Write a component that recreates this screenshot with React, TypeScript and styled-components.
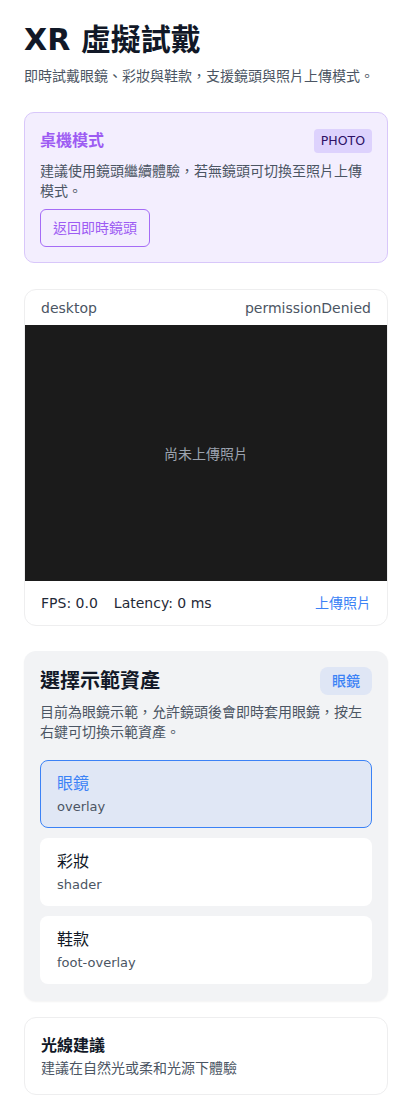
import React from "react";
import styled, { createGlobalStyle } from "styled-components";

const Global = createGlobalStyle`
  * { box-sizing: border-box; }
  html, body { margin: 0; padding: 0; background: #ffffff; }
  body {
    font-family: "DejaVu Sans", "Noto Sans CJK TC", sans-serif;
    color: #111827;
    -webkit-font-smoothing: antialiased;
  }
`;

const Page = styled.main`
  display: flex;
  flex-direction: column;
  padding: 22px 24px 24px;
`;

const Header = styled.header`
  display: flex;
  flex-direction: column;
  gap: 8px;
  margin-bottom: 26px;
`;

const Title = styled.h1`
  margin: 0;
  font-size: 30px;
  line-height: 36px;
  font-weight: 700;
  color: #111827;
`;

const Subtitle = styled.p`
  margin: 0;
  font-size: 14px;
  line-height: 20px;
  color: #4b5563;
`;

const NoticeCard = styled.section`
  display: flex;
  flex-direction: column;
  align-items: flex-start;
  gap: 8px;
  padding: 15px;
  background: #f3eefe;
  border: 1px solid #d8c7fa;
  border-radius: 10px;
  margin-bottom: 26px;
`;

const RowBetween = styled.div`
  display: flex;
  align-items: center;
  justify-content: space-between;
  align-self: stretch;
  min-height: 25px;
`;

const NoticeTitle = styled.h2`
  margin: 0;
  font-size: 16px;
  line-height: 24px;
  font-weight: 700;
  color: #9d5cf3;
`;

const Badge = styled.span<{ $tone: "purple" | "blue" }>`
  display: inline-flex;
  align-items: center;
  font-size: ${(p) => (p.$tone === "purple" ? "12.5px" : "14px")};
  line-height: ${(p) => (p.$tone === "purple" ? "16px" : "20px")};
  padding: 4px ${(p) => (p.$tone === "purple" ? "7px" : "12px")};
  border-radius: ${(p) => (p.$tone === "purple" ? "4px" : "8px")};
  background: ${(p) => (p.$tone === "purple" ? "#ddd2fd" : "#dfe6f5")};
  color: ${(p) => (p.$tone === "purple" ? "#2e1065" : "#3b82f6")};
  font-weight: 500;
`;

const BodyText = styled.p`
  margin: 0;
  font-size: 14px;
  line-height: 20px;
  color: #4b5563;
`;

const OutlineButton = styled.button`
  font-family: inherit;
  font-size: 14px;
  line-height: 20px;
  height: 38px;
  padding: 0 12px;
  border: 1px solid #a56cf6;
  border-radius: 6px;
  background: transparent;
  color: #9d5cf3;
  cursor: pointer;
`;

const CameraCard = styled.section`
  display: flex;
  flex-direction: column;
  border: 1px solid #eeeeef;
  border-radius: 12px;
  overflow: hidden;
  background: #ffffff;
  margin-bottom: 25px;
`;

const CameraBar = styled.div<{ $pos: "top" | "bottom" }>`
  display: flex;
  align-items: center;
  justify-content: space-between;
  padding: 0 16px;
  height: ${(p) => (p.$pos === "top" ? "35px" : "44px")};
  font-size: 14px;
  line-height: 20px;
  color: ${(p) => (p.$pos === "top" ? "#4b5563" : "#1f2937")};
`;

const Stats = styled.div`
  display: flex;
  gap: 16px;
`;

const LinkText = styled.span`
  color: #3b82f6;
`;

const Viewport = styled.div`
  display: flex;
  align-items: center;
  justify-content: center;
  height: 256px;
  background: #1b1b1b;
  color: #9ca3af;
  font-size: 14px;
`;

const AssetCard = styled.section`
  display: flex;
  flex-direction: column;
  padding: 16px 16px 17px;
  background: #f2f3f5;
  border-radius: 12px;
  box-shadow: 0 1px 2px rgba(0, 0, 0, 0.05);
  margin-bottom: 16px;
`;

const AssetTitle = styled.h2`
  margin: 0;
  font-size: 20px;
  line-height: 28px;
  font-weight: 700;
  color: #111827;
`;

const AssetDesc = styled(BodyText)`
  margin-top: 7px;
`;

const OptionList = styled.div`
  display: flex;
  flex-direction: column;
  gap: 10px;
  margin-top: 18px;
`;

const Option = styled.button<{ $active?: boolean }>`
  display: flex;
  flex-direction: column;
  align-items: flex-start;
  gap: 4px;
  padding: 12px 16px;
  text-align: left;
  font-family: inherit;
  border: 1px solid ${(p) => (p.$active ? "#3b82f6" : "transparent")};
  border-radius: 8px;
  background: ${(p) => (p.$active ? "#e0e7f5" : "#ffffff")};
  cursor: pointer;
`;

const OptionName = styled.span<{ $active?: boolean }>`
  font-size: 16px;
  line-height: 21px;
  color: ${(p) => (p.$active ? "#3b82f6" : "#111827")};
`;

const OptionKind = styled.span`
  font-size: 13px;
  line-height: 17px;
  color: #4b5563;
`;

const TipCard = styled.section`
  display: flex;
  flex-direction: column;
  padding: 16px;
  border: 1px solid #eeeeef;
  border-radius: 12px;
  background: #ffffff;
`;

const TipTitle = styled.h3`
  margin: 0;
  font-size: 16px;
  line-height: 24px;
  font-weight: 700;
  color: #111827;
`;

const assets = [
  { name: "眼鏡", kind: "overlay", active: true },
  { name: "彩妝", kind: "shader", active: false },
  { name: "鞋款", kind: "foot-overlay", active: false },
];

export default function App() {
  return (
    <>
      <Global />
      <Page>
        <Header>
          <Title>XR 虛擬試戴</Title>
          <Subtitle>即時試戴眼鏡、彩妝與鞋款，支援鏡頭與照片上傳模式。</Subtitle>
        </Header>

        <NoticeCard>
          <RowBetween>
            <NoticeTitle>桌機模式</NoticeTitle>
            <Badge $tone="purple">PHOTO</Badge>
          </RowBetween>
          <BodyText>建議使用鏡頭繼續體驗，若無鏡頭可切換至照片上傳模式。</BodyText>
          <OutlineButton>返回即時鏡頭</OutlineButton>
        </NoticeCard>

        <CameraCard>
          <CameraBar $pos="top">
            <span>desktop</span>
            <span>permissionDenied</span>
          </CameraBar>
          <Viewport>尚未上傳照片</Viewport>
          <CameraBar $pos="bottom">
            <Stats>
              <span>FPS: 0.0</span>
              <span>Latency: 0 ms</span>
            </Stats>
            <LinkText>上傳照片</LinkText>
          </CameraBar>
        </CameraCard>

        <AssetCard>
          <RowBetween>
            <AssetTitle>選擇示範資產</AssetTitle>
            <Badge $tone="blue">眼鏡</Badge>
          </RowBetween>
          <AssetDesc>目前為眼鏡示範，允許鏡頭後會即時套用眼鏡，按左右鍵可切換示範資產。</AssetDesc>
          <OptionList>
            {assets.map((a) => (
              <Option key={a.name} $active={a.active}>
                <OptionName $active={a.active}>{a.name}</OptionName>
                <OptionKind>{a.kind}</OptionKind>
              </Option>
            ))}
          </OptionList>
        </AssetCard>

        <TipCard>
          <TipTitle>光線建議</TipTitle>
          <BodyText>建議在自然光或柔和光源下體驗</BodyText>
        </TipCard>
      </Page>
    </>
  );
}
